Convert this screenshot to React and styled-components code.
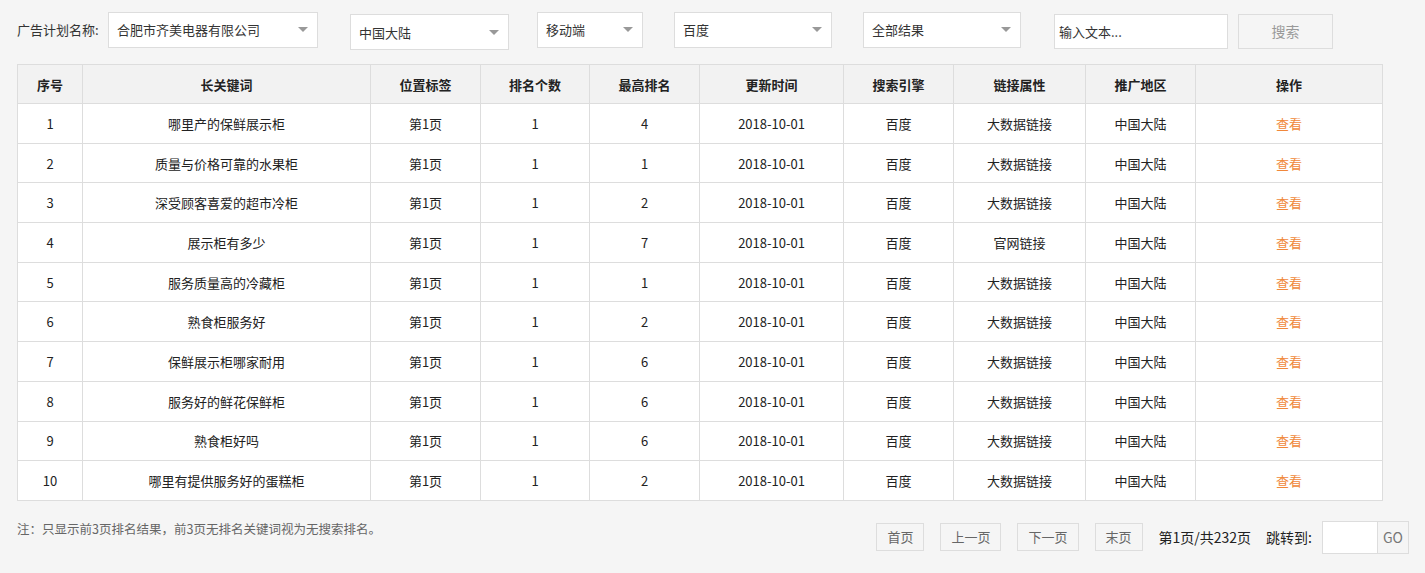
import React from "react";
import styled, { createGlobalStyle } from "styled-components";

const Global = createGlobalStyle`
  html, body { margin: 0; padding: 0; background: #f5f5f5; }
  body { font-family: "Noto Sans CJK SC", "Noto Sans", sans-serif; color: #333; }
  * { box-sizing: border-box; }
`;

const Page = styled.div`
  padding: 12px 0 0 17px;
  width: 1425px;
  height: 573px;
  overflow: hidden;
`;

const Toolbar = styled.div`
  display: flex;
  align-items: flex-start;
  height: 37px;
`;

const Label = styled.div`
  width: 91px;
  font-size: 13px;
  line-height: 36px;
  color: #333;
  white-space: nowrap;
`;

const Select = styled.div`
  position: relative;
  width: ${(p) => p.w}px;
  height: 36px;
  margin-left: ${(p) => p.ml || 0}px;
  margin-top: ${(p) => p.mt || 0}px;
  background: #fff;
  border: 1px solid #ddd;
  font-size: 13px;
  line-height: ${(p) => p.lh || 34}px;
  padding-left: 8px;
  color: #333;
`;

const Arrow = styled.span`
  position: absolute;
  right: 9px;
  top: ${(p) => p.top || 14}px;
  width: 0;
  height: 0;
  border-left: 5px solid transparent;
  border-right: 5px solid transparent;
  border-top: 5px solid #999;
`;

const TextInput = styled.div`
  width: 174px;
  height: 35px;
  margin-left: ${(p) => p.ml}px;
  margin-top: 2px;
  background: #fff;
  border: 1px solid #ddd;
  font-size: 13px;
  line-height: 33px;
  padding-left: 4px;
  color: #333;
`;

const SearchButton = styled.div`
  width: 95px;
  height: 35px;
  margin-left: 10px;
  margin-top: 2px;
  border: 1px solid #ddd;
  background: #f5f5f5;
  color: #999;
  font-size: 14px;
  line-height: 33px;
  text-align: center;
`;

const Table = styled.table`
  margin-top: 15px;
  width: 1365px;
  border-collapse: collapse;
  table-layout: fixed;
  background: #fff;
  font-size: 13px;
`;

const Th = styled.th`
  height: 39px;
  background: #f2f2f2;
  border: 1px solid #ddd;
  font-weight: bold;
  color: #222;
  text-align: center;
  padding: 0;
`;

const Td = styled.td`
  height: 39.7px;
  border: 1px solid #ddd;
  text-align: center;
  color: ${(p) => (p.link ? "#f0883a" : "#222")};
  padding: 0;
`;

const Footer = styled.div`
  display: flex;
  align-items: flex-start;
  justify-content: space-between;
  width: 1392px;
  margin-top: 20px;
`;

const Note = styled.div`
  font-size: 12.5px;
  line-height: 16px;
  color: #666;
`;

const Pager = styled.div`
  display: flex;
  align-items: center;
  height: 33px;
`;

const PageBtn = styled.div`
  height: 28px;
  padding: 0 10px;
  margin-right: 16px;
  border: 1px solid #ddd;
  color: #666;
  font-size: 13px;
  line-height: 26px;
`;

const PageInfo = styled.div`
  font-size: 14px;
  color: #222;
  margin-right: ${(p) => p.mr}px;
  white-space: nowrap;
`;

const JumpInput = styled.div`
  width: 56px;
  height: 33px;
  background: #fff;
  border: 1px solid #ddd;
`;

const GoBtn = styled.div`
  width: 31px;
  height: 33px;
  border: 1px solid #ddd;
  border-left: none;
  color: #777;
  font-size: 14px;
  line-height: 31px;
  text-align: center;
`;

const cols = [65, 288, 110, 109, 110, 144, 110, 132, 110, 187];
const headers = ["序号", "长关键词", "位置标签", "排名个数", "最高排名", "更新时间", "搜索引擎", "链接属性", "推广地区", "操作"];
const rows = [
  ["哪里产的保鲜展示柜", 4, "大数据链接"],
  ["质量与价格可靠的水果柜", 1, "大数据链接"],
  ["深受顾客喜爱的超市冷柜", 2, "大数据链接"],
  ["展示柜有多少", 7, "官网链接"],
  ["服务质量高的冷藏柜", 1, "大数据链接"],
  ["熟食柜服务好", 2, "大数据链接"],
  ["保鲜展示柜哪家耐用", 6, "大数据链接"],
  ["服务好的鲜花保鲜柜", 6, "大数据链接"],
  ["熟食柜好吗", 6, "大数据链接"],
  ["哪里有提供服务好的蛋糕柜", 2, "大数据链接"],
];

export default function App() {
  return (
    <Page>
      <Global />
      <Toolbar>
        <Label>广告计划名称:</Label>
        <Select w={210} lh={34}>合肥市齐美电器有限公司<Arrow /></Select>
        <Select w={159} ml={32} mt={2} lh={36}>中国大陆<Arrow top={15} /></Select>
        <Select w={106} ml={28}>移动端<Arrow /></Select>
        <Select w={158} ml={31}>百度<Arrow /></Select>
        <Select w={158} ml={31}>全部结果<Arrow /></Select>
        <TextInput ml={33}>输入文本...</TextInput>
        <SearchButton>搜索</SearchButton>
      </Toolbar>
      <Table>
        <colgroup>
          {cols.map((w, i) => (
            <col key={i} style={{ width: w }} />
          ))}
        </colgroup>
        <thead>
          <tr>
            {headers.map((h) => (
              <Th key={h}>{h}</Th>
            ))}
          </tr>
        </thead>
        <tbody>
          {rows.map((r, i) => (
            <tr key={i}>
              <Td>{i + 1}</Td>
              <Td>{r[0]}</Td>
              <Td>第1页</Td>
              <Td>1</Td>
              <Td>{r[1]}</Td>
              <Td>2018-10-01</Td>
              <Td>百度</Td>
              <Td>{r[2]}</Td>
              <Td>中国大陆</Td>
              <Td link>查看</Td>
            </tr>
          ))}
        </tbody>
      </Table>
      <Footer>
        <Note>注：只显示前3页排名结果，前3页无排名关键词视为无搜索排名。</Note>
        <Pager>
          <PageBtn>首页</PageBtn>
          <PageBtn>上一页</PageBtn>
          <PageBtn>下一页</PageBtn>
          <PageBtn>末页</PageBtn>
          <PageInfo mr={15}>第1页/共232页</PageInfo>
          <PageInfo mr={10}>跳转到:</PageInfo>
          <JumpInput />
          <GoBtn>GO</GoBtn>
        </Pager>
      </Footer>
    </Page>
  );
}
